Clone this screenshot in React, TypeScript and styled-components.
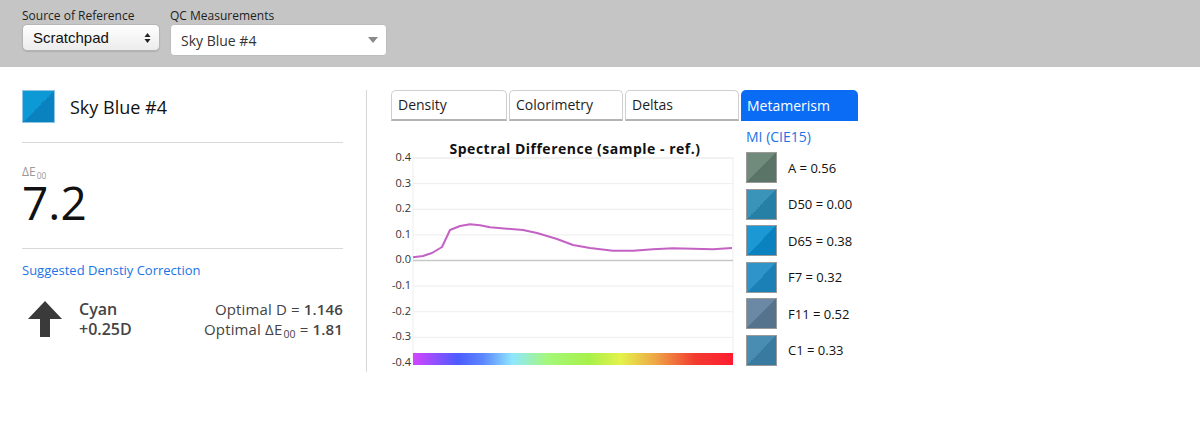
import React from 'react';
import styled, { createGlobalStyle } from 'styled-components';

const GlobalStyle = createGlobalStyle`
  body {
    margin: 0;
    font-family: 'Open Sans', 'DejaVu Sans', sans-serif;
    background: #fff;
    color: #222;
  }
`;

const TopBar = styled.div`
  height: 67px;
  box-sizing: border-box;
  background: #c5c5c5;
  display: flex;
  gap: 10px;
  padding: 8px 0 0 22px;
`;

const Field = styled.div`
  display: flex;
  flex-direction: column;
`;

const FieldLabel = styled.label`
  font-size: 12px;
  line-height: 16px;
  color: #1e1e1e;
`;

const NativeSelect = styled.div`
  width: 138px;
  height: 27px;
  box-sizing: border-box;
  border-radius: 5px;
  border: 1px solid #b5b5b5;
  background: linear-gradient(#ffffff, #ececec);
  box-shadow: 0 1px 1px rgba(0, 0, 0, 0.12);
  display: flex;
  align-items: center;
  justify-content: space-between;
  padding: 0 8px 0 10px;
  font-family: 'Liberation Sans', Arial, sans-serif;
  font-size: 15px;
  color: #111;
`;

const DropSelect = styled.div`
  width: 217px;
  height: 32px;
  box-sizing: border-box;
  border-radius: 4px;
  border: 1px solid #bdbdbd;
  background: #fff;
  display: flex;
  align-items: center;
  justify-content: space-between;
  padding: 0 8px 0 10px;
  font-size: 14px;
  color: #333;
`;

const Main = styled.div`
  display: flex;
  padding: 23px 0 0 22px;
`;

const LeftCol = styled.div`
  width: 321px;
  display: flex;
  flex-direction: column;
`;

const Swatch = styled.div<{ $a: string; $b: string; $size: number }>`
  width: ${(p) => p.$size}px;
  height: ${(p) => p.$size}px;
  box-sizing: border-box;
  flex: none;
  border: 1px solid ${(p) => (p.$size > 31 ? '#8fc4e6' : '#9a9a9a')};
  background: linear-gradient(to bottom right, ${(p) => p.$a} 50%, ${(p) => p.$b} 50%);
`;

const NameRow = styled.div`
  display: flex;
  align-items: center;
  gap: 15px;
  height: 33px;
`;

const SampleName = styled.div`
  font-size: 18px;
  color: #111;
`;

const Rule = styled.div<{ $top: number }>`
  height: 1px;
  background: #d8d8d8;
  margin-top: ${(p) => p.$top}px;
`;

const DeltaLabel = styled.div`
  margin-top: 21px;
  font-size: 12px;
  line-height: 16px;
  color: #9a9a9a;
`;

const Sub = styled.span`
  display: inline-block;
  margin-left: 1px;
  font-size: 0.7em;
  line-height: 1;
  transform: translateY(0.3em);
`;

const DeltaValue = styled.div`
  font-size: 46px;
  line-height: 46px;
  font-weight: 400;
  color: #111;
  margin-top: -1px;
`;

const LinkTitle = styled.div`
  margin-top: 12px;
  font-size: 13px;
  line-height: 18px;
  color: #1b74e4;
`;

const CorrectionRow = styled.div`
  display: flex;
  align-items: center;
  margin-top: 20px;
`;

const ArrowBox = styled.div`
  width: 51px;
  padding-left: 6px;
  display: flex;
`;

const Channel = styled.div`
  font-size: 16px;
  line-height: 20px;
  font-weight: 600;
  color: #444;
`;

const Optimal = styled.div`
  margin-left: auto;
  text-align: right;
  font-size: 15px;
  line-height: 20px;
  letter-spacing: 0.15px;
  color: #444;
  b {
    font-weight: 600;
  }
`;

const Divider = styled.div`
  width: 1px;
  height: 282px;
  background: #d6d6d6;
  margin-left: 23px;
`;

const RightCol = styled.div`
  margin-left: 24px;
  display: flex;
  flex-direction: column;
`;

const Tabs = styled.div`
  display: flex;
  gap: 2px;
`;

const Tab = styled.div<{ $active?: boolean; $w: number }>`
  width: ${(p) => p.$w}px;
  height: 31px;
  box-sizing: border-box;
  border-radius: 5px 5px 0 0;
  padding: 0 6px 1px;
  display: flex;
  align-items: center;
  font-size: 14px;
  color: ${(p) => (p.$active ? '#fff' : '#1e1e1e')};
  background: ${(p) => (p.$active ? '#0a6cf5' : '#fff')};
  border: ${(p) => (p.$active ? 'none' : '1px solid #cfcfcf')};
  border-bottom: ${(p) => (p.$active ? 'none' : '2px solid #b4b4b4')};
`;

const Body = styled.div`
  display: flex;
`;

const ChartBox = styled.div`
  width: 346px;
  display: flex;
  flex-direction: column;
`;

const ChartTitle = styled.div`
  margin-top: 19px;
  padding-left: 22px;
  text-align: center;
  font-size: 14px;
  line-height: 18px;
  font-weight: 700;
  letter-spacing: 0.5px;
  color: #111;
`;

const ChartSvg = styled.svg`
  display: block;
  margin-top: -8px;
`;

const Legend = styled.div`
  margin-left: 9px;
  display: flex;
  flex-direction: column;
`;

const LegendTitle = styled.div`
  margin-top: 6px;
  font-size: 14px;
  line-height: 20px;
  color: #1b74e4;
  margin-bottom: 5px;
`;

const LegendItem = styled.div`
  display: flex;
  align-items: center;
  gap: 11px;
  height: 31px;
  margin-bottom: 5.6px;
  font-size: 13px;
  color: #111;
`;

const illuminants = [
  { name: 'A', value: '0.56', a: '#708a7c', b: '#5a7568' },
  { name: 'D50', value: '0.00', a: '#3a93b9', b: '#267fa5' },
  { name: 'D65', value: '0.38', a: '#1c98d5', b: '#0a82bf' },
  { name: 'F7', value: '0.32', a: '#2f94c9', b: '#1a80b6' },
  { name: 'F11', value: '0.52', a: '#6b89a4', b: '#56738e' },
  { name: 'C1', value: '0.33', a: '#4a8db2', b: '#387aa0' },
];

const curve: [number, number][] = [
  [22, 107.3], [32, 106], [41, 103], [51, 97], [59, 80], [69, 76], [79, 74.3],
  [89, 75.3], [99, 77.3], [116, 78.7], [132, 80], [146, 83], [166, 89],
  [182, 95], [199, 98], [222, 100.7], [242, 100.7], [262, 99.3], [282, 98.3],
  [302, 98.7], [322, 99.3], [341, 98],
];

const ticks = [0.4, 0.3, 0.2, 0.1, 0, -0.1, -0.2, -0.3, -0.4];
const yOf = (v: number) => 8 + (0.4 - v) * 256.25;

const SpectralChart = () => (
  <ChartSvg width={346} height={222} viewBox="0 0 346 222">
    <defs>
      <linearGradient id="spectrum" x1="0" x2="1" y1="0" y2="0">
        <stop offset="0" stopColor="#d445ff" />
        <stop offset="0.14" stopColor="#4c5cff" />
        <stop offset="0.22" stopColor="#5c88ff" />
        <stop offset="0.31" stopColor="#8fe6ff" />
        <stop offset="0.42" stopColor="#a4f87a" />
        <stop offset="0.55" stopColor="#a8f04a" />
        <stop offset="0.65" stopColor="#e4f24a" />
        <stop offset="0.76" stopColor="#eea446" />
        <stop offset="0.88" stopColor="#f23c30" />
        <stop offset="1" stopColor="#ff1c30" />
      </linearGradient>
    </defs>
    <rect x={22} y={8} width={320} height={205} fill="none" stroke="#ededed" />
    {ticks.map((t) => (
      <g key={t}>
        <line
          x1={22}
          x2={342}
          y1={yOf(t)}
          y2={yOf(t)}
          stroke={t === 0 ? '#c8c8c8' : '#ededed'}
          strokeWidth={t === 0 ? 1.5 : 1}
        />
        <text
          x={20}
          y={yOf(t)}
          textAnchor="end"
          dominantBaseline="middle"
          fontSize={11}
          fill="#333"
          fontFamily="'Open Sans', sans-serif"
        >
          {t.toFixed(1)}
        </text>
      </g>
    ))}
    <rect x={22} y={203} width={320} height={12} fill="url(#spectrum)" />
    <polyline
      points={curve.map(([x, y]) => `${x},${y}`).join(' ')}
      fill="none"
      stroke="#c462c4"
      strokeWidth={2}
      strokeLinejoin="round"
    />
  </ChartSvg>
);

export default function App() {
  return (
    <>
      <GlobalStyle />
      <TopBar>
        <Field>
          <FieldLabel>Source of Reference</FieldLabel>
          <NativeSelect>
            Scratchpad
            <svg width="7" height="12" viewBox="0 0 7 12">
              <path d="M3.5 1 L6.5 5 H0.5 Z M3.5 11 L6.5 7 H0.5 Z" fill="#222" />
            </svg>
          </NativeSelect>
        </Field>
        <Field>
          <FieldLabel>QC Measurements</FieldLabel>
          <DropSelect>
            Sky Blue #4
            <svg width="10" height="6" viewBox="0 0 10 6">
              <path d="M0 0 H10 L5 6 Z" fill="#8a8a8a" />
            </svg>
          </DropSelect>
        </Field>
      </TopBar>
      <Main>
        <LeftCol>
          <NameRow>
            <Swatch $size={33} $a="#0d98d6" $b="#0a82bf" />
            <SampleName>Sky Blue #4</SampleName>
          </NameRow>
          <Rule $top={19} />
          <DeltaLabel>
            ΔE<Sub>00</Sub>
          </DeltaLabel>
          <DeltaValue>7.2</DeltaValue>
          <Rule $top={23} />
          <LinkTitle>Suggested Denstiy Correction</LinkTitle>
          <CorrectionRow>
            <ArrowBox>
              <svg width="34" height="36" viewBox="0 0 34 36">
                <path d="M17 0 L34 18 H22 V36 H12 V18 H0 Z" fill="#3a3a3a" />
              </svg>
            </ArrowBox>
            <div>
              <Channel>Cyan</Channel>
              <Channel>+0.25D</Channel>
            </div>
            <Optimal>
              <div>
                Optimal D = <b>1.146</b>
              </div>
              <div>
                Optimal ΔE<Sub>00</Sub> = <b>1.81</b>
              </div>
            </Optimal>
          </CorrectionRow>
        </LeftCol>
        <Divider />
        <RightCol>
          <Tabs>
            <Tab $w={116}>Density</Tab>
            <Tab $w={114}>Colorimetry</Tab>
            <Tab $w={114}>Deltas</Tab>
            <Tab $w={117} $active>
              Metamerism
            </Tab>
          </Tabs>
          <Body>
            <ChartBox>
              <ChartTitle>Spectral Difference (sample - ref.)</ChartTitle>
              <SpectralChart />
            </ChartBox>
            <Legend>
              <LegendTitle>MI (CIE15)</LegendTitle>
              {illuminants.map((it) => (
                <LegendItem key={it.name}>
                  <Swatch $size={31} $a={it.a} $b={it.b} />
                  {it.name} = {it.value}
                </LegendItem>
              ))}
            </Legend>
          </Body>
        </RightCol>
      </Main>
    </>
  );
}
